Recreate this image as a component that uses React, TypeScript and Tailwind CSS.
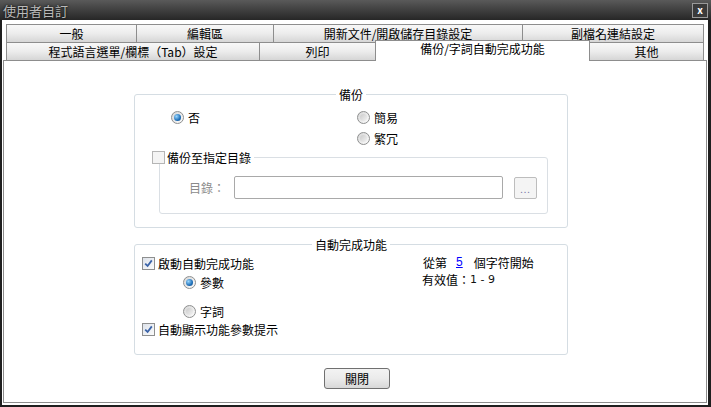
import React from "react";

const FONT = "font-['Noto_Sans_CJK_TC','Liberation_Sans',sans-serif]";

function Radio({ checked }: { checked?: boolean }) {
	return (
		<span className="flex h-[13px] w-[13px] shrink-0 items-center justify-center rounded-full border border-[#8e8f8f] bg-gradient-to-br from-[#d6d6d6] to-[#fdfdfd]">
			{checked ? (
				<span className="h-[7px] w-[7px] rounded-full bg-[radial-gradient(circle_at_35%_35%,#9ad8ff,#1f6fb8_60%,#0d4682)]" />
			) : (
				<span className="h-[7px] w-[7px] rounded-full bg-gradient-to-br from-[#cbcbcb] to-[#f2f2f2]" />
			)}
		</span>
	);
}

function Check({ checked, disabled }: { checked?: boolean; disabled?: boolean }) {
	return (
		<span
			className={
				disabled
					? "flex h-[13px] w-[13px] shrink-0 items-center justify-center border border-[#b5b5b5] bg-[#f4f4f4]"
					: "flex h-[13px] w-[13px] shrink-0 items-center justify-center border border-[#8e8f8f] bg-gradient-to-br from-[#dde2ea] to-[#fbfbfb]"
			}
		>
			{checked && (
				<svg width="9" height="9" viewBox="0 0 9 9">
					<path d="M1.2 4.6 L3.6 7 L7.8 1.4" fill="none" stroke="#3a63a8" strokeWidth="1.8" />
				</svg>
			)}
		</span>
	);
}

const TAB = "flex h-[18px] items-center justify-center border-t border-[#8d8d8d] bg-gradient-to-b from-[#f8f8f8] via-[#ececec] to-[#d6d6d6] text-[12px] leading-[13px] text-black";

export default function App() {
	return (
		<div className={`flex h-[407px] w-[711px] flex-col bg-[#1f1f1f] ${FONT}`}>
			{/* Title bar */}
			<div className="flex h-[20px] shrink-0 items-center justify-between bg-gradient-to-b from-[#5a5a5a] to-[#272727] pl-[3px] pr-[3px]">
				<span className="text-[13px] leading-none text-[#b9b9b9] [text-shadow:0_0_3px_#000]">使用者自訂</span>
				<span className="flex h-[15px] w-[16px] items-center justify-center border border-[#9a9a9a] bg-[#3a3a3a] text-[10px] font-bold leading-none text-white">
					x
				</span>
			</div>

			{/* Body */}
			<div className="mb-[2px] ml-[2px] mr-[3px] flex flex-1 flex-col bg-white pb-[2px] pl-[1px] pr-[1px] pt-[4px]">
				{/* Tabs */}
				<div className="ml-[3px] flex flex-col">
					<div className="flex">
						<div className={`${TAB} w-[130px] border-l`}>一般</div>
						<div className={`${TAB} w-[137px] border-l`}>編輯區</div>
						<div className={`${TAB} w-[249px] border-l`}>開新文件/開啟儲存目錄設定</div>
						<div className={`${TAB} w-[182px] border-l border-r`}>副檔名連結設定</div>
					</div>
					<div className="flex h-[18px] items-start">
						<div className={`${TAB} w-[253px] border-l`}>程式語言選單/欄標（Tab）設定</div>
						<div className={`${TAB} w-[116px] border-l`}>列印</div>
						<div className="relative z-10 -mt-[2px] flex h-[21px] w-[215px] justify-center border-l border-r border-t border-[#8d8d8d] bg-white pt-[1px] text-[12px] leading-[13px] text-black">
							備份/字詞自動完成功能
						</div>
						<div className={`${TAB} w-[114px] border-r`}>其他</div>
					</div>
				</div>

				{/* Panel */}
				<div className="flex flex-1 flex-col border border-[#8d8d8d] bg-white text-[12px] leading-[13px] text-black">
					{/* 備份 group */}
					<div className="relative ml-[130px] mt-[33px] h-[134px] w-[434px] rounded-[3px] border border-[#d5dde3] pt-[16px]">
						<span className="absolute left-1/2 top-[-7px] -translate-x-1/2 bg-white px-[3px]">備份</span>
						<div className="flex h-[13px] items-center pl-[36px]">
							<div className="flex w-[186px] items-center gap-[4px]">
								<Radio checked />
								<span>否</span>
							</div>
							<div className="flex items-center gap-[4px]">
								<Radio />
								<span>簡易</span>
							</div>
						</div>
						<div className="mt-[8px] flex h-[13px] items-center gap-[4px] pl-[222px]">
							<Radio />
							<span>繁冗</span>
						</div>
						<div className="relative ml-[24px] mr-[19px] mt-[12px] h-[57px] rounded-[3px] border border-[#dadfe4] pt-[18px]">
							<div className="absolute left-[-8px] top-[-7px] flex items-center gap-[2px] bg-white pr-[3px]">
								<Check disabled />
								<span>備份至指定目錄</span>
							</div>
							<div className="flex items-center pl-[29px]">
								<span className="w-[45px] text-[#8a8a8a]">目錄：</span>
								<div className="h-[23px] w-[269px] rounded-[2px] border border-[#a9a9a9] bg-white" />
								<div className="ml-[11px] flex h-[22px] w-[23px] items-end justify-center rounded-[2px] border border-[#bdbdbd] bg-[#f4f4f4] pb-[4px] text-[9px] leading-none tracking-[1px] text-[#7a78a8]">
									...
								</div>
							</div>
						</div>
					</div>

					{/* 自動完成功能 group */}
					<div className="relative ml-[130px] mt-[16px] flex h-[111px] w-[434px] rounded-[3px] border border-[#d5dde3]">
						<span className="absolute left-1/2 top-[-7px] -translate-x-1/2 bg-white px-[3px]">自動完成功能</span>
						<div className="flex w-[288px] flex-col pl-[7px] pt-[12px]">
							<div className="flex h-[13px] items-center gap-[3px]">
								<Check checked />
								<span>啟動自動完成功能</span>
							</div>
							<div className="mt-[6px] flex h-[13px] items-center gap-[4px] pl-[41px]">
								<Radio checked />
								<span>參數</span>
							</div>
							<div className="mt-[16px] flex h-[13px] items-center gap-[4px] pl-[41px]">
								<Radio />
								<span>字詞</span>
							</div>
							<div className="mt-[5px] flex h-[13px] items-center gap-[3px]">
								<Check checked />
								<span>自動顯示功能參數提示</span>
							</div>
						</div>
						<div className="flex flex-col pt-[9px] leading-[17px]">
							<div className="flex items-center">
								<span>從第</span>
								<span className="ml-[9px] font-['Liberation_Sans',sans-serif] text-[12px] text-[#0000ff] underline">5</span>
								<span className="ml-[11px]">個字符開始</span>
							</div>
							<div className="-ml-[1px] flex items-center">
								<span>有效值：</span>
								<span className="font-['DejaVu_Sans',sans-serif] text-[11px] text-[#111]">1 - 9</span>
							</div>
						</div>
					</div>

					{/* Close button */}
					<div className="ml-[320px] mt-[13px] flex h-[21px] w-[66px] items-center justify-center rounded-[3px] border border-[#707070] bg-gradient-to-b from-[#f3f3f3] via-[#ebebeb] to-[#d8d8d8]">
						關閉
					</div>
				</div>
			</div>
		</div>
	);
}
